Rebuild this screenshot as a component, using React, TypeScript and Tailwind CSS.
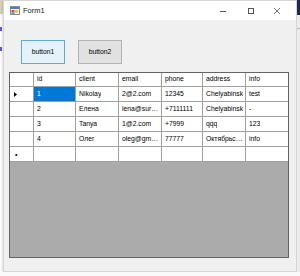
import React from "react";

type Row = {
  id: string;
  client: string;
  email: string;
  phone: string;
  address: string;
  info: string;
};

const rows: Row[] = [
  { id: "1", client: "Nikolay", email: "2@2.com", phone: "12345", address: "Chelyabinsk", info: "test" },
  { id: "2", client: "Елена", email: "lena@sureline.ru", phone: "+7111111", address: "Chelyabinsk", info: "-" },
  { id: "3", client: "Tanya", email: "1@2.com", phone: "+7999", address: "qqq", info: "123" },
  { id: "4", client: "Олег", email: "oleg@gmail.com", phone: "77777", address: "Октябрьская", info: "info" },
];

const cols: { key: keyof Row; label: string; w: string }[] = [
  { key: "id", label: "id", w: "w-[42px]" },
  { key: "client", label: "client", w: "w-[43px]" },
  { key: "email", label: "email", w: "w-[43px]" },
  { key: "phone", label: "phone", w: "w-[41px]" },
  { key: "address", label: "address", w: "w-[43px]" },
  { key: "info", label: "info", w: "w-[41px]" },
];

const FormIcon = () => (
  <svg width="10" height="9" viewBox="0 0 10 9">
    <rect x="0.5" y="0.5" width="9" height="8" fill="#f4f4f4" stroke="#8a8a8a" />
    <rect x="1" y="1" width="8" height="2" fill="#3c7fd6" />
    <rect x="1.5" y="4" width="3" height="2.5" fill="#e04a3a" />
    <rect x="5" y="4" width="3" height="2.5" fill="#f2c230" />
    <rect x="1.5" y="6.5" width="3" height="1.5" fill="#4a9be0" />
  </svg>
);

function GridRow({ row, current }: { row?: Row; current?: boolean }) {
  return (
    <div className="flex h-[15px] border-b border-[#a0a0a0] bg-white">
      <div className="flex w-[24px] items-center border-r border-[#a0a0a0] pl-[4px]">
        {current && (
          <svg width="3" height="5" viewBox="0 0 3 5">
            <path d="M0 0 L3 2.5 L0 5 Z" fill="#000" />
          </svg>
        )}
        {!row && <span className="ml-[1px] text-[7px] leading-none">•</span>}
      </div>
      {cols.map((c, i) => (
        <div
          key={c.key}
          className={`flex ${c.w} items-center overflow-hidden border-r border-[#a0a0a0] last:border-r-0 ${
            current && i === 0 ? "bg-[#0078d7] text-white" : ""
          }`}
        >
          <span className="truncate pl-[3px]">{row ? row[c.key] : ""}</span>
        </div>
      ))}
    </div>
  );
}

export default function App() {
  return (
    <div
      className="flex h-[276px] w-[300px] flex-col overflow-hidden bg-[#f7f7f7] text-black"
      style={{ fontFamily: '"Liberation Sans", Arial, sans-serif' }}
    >
      <div className="flex h-[272px]">
        {/* IDE behind, left */}
        <div className="flex w-[3px] flex-col bg-white">
          <div className="h-[14px] bg-[#d8d4b8]" />
          <div className="mt-[13px] h-[4px] w-[2px] bg-[#5a5af0]" />
          <div className="mt-[16px] h-[4px] w-[2px] bg-[#5a5af0]" />
        </div>

        {/* window */}
        <div className="flex w-[294px] flex-col border border-[#d6d6d6] bg-[#f0f0f0] shadow-[0_1px_3px_rgba(0,0,0,0.25)]">
          <div className="flex h-[19px] shrink-0 items-center bg-white">
            <div className="ml-[6px]">
              <FormIcon />
            </div>
            <span className="ml-[3px] text-[7.5px] text-[#222]">Form1</span>
            <div className="ml-auto flex items-center">
              <div className="flex w-[28px] justify-center">
                <div className="mt-[1px] h-px w-[6px] bg-[#555]" />
              </div>
              <div className="flex w-[28px] justify-center">
                <div className="h-[6px] w-[6px] border border-[#555]" />
              </div>
              <div className="mr-[7px] flex w-[24px] justify-center">
                <svg width="6" height="6" viewBox="0 0 6 6">
                  <path d="M0 0 L6 6 M6 0 L0 6" stroke="#555" strokeWidth="0.8" />
                </svg>
              </div>
            </div>
          </div>

          <div className="flex flex-col px-[5px] pt-[20px] text-[6.8px]">
            <div className="ml-[12px] flex gap-[13px]">
              <div className="flex h-[24px] w-[44px] items-center justify-center border border-[#5fa6e8] bg-[#e5f1fb]">
                button1
              </div>
              <div className="flex h-[24px] w-[44px] items-center justify-center border border-[#b4b4b4] bg-[#e1e1e1]">
                button2
              </div>
            </div>

            <div className="mt-[8px] flex h-[186px] w-[280px] flex-col border border-[#646464] bg-[#ababab]">
              <div className="flex h-[14px] border-b border-[#a0a0a0] bg-white">
                <div className="w-[24px] border-r border-[#a0a0a0]" />
                {cols.map((c) => (
                  <div
                    key={c.key}
                    className={`flex ${c.w} items-center border-r border-[#a0a0a0] last:border-r-0`}
                  >
                    <span className="pl-[3px]">{c.label}</span>
                  </div>
                ))}
              </div>
              {rows.map((r, i) => (
                <GridRow key={r.id} row={r} current={i === 0} />
              ))}
              <GridRow />
            </div>
          </div>
        </div>

        {/* IDE behind, right */}
        <div className="flex w-[3px] flex-col bg-[#ececec]">
          <div className="h-[15px] bg-[#1e2b4d]" />
          <div className="mt-[13px] h-px bg-[#b8b8b8]" />
        </div>
      </div>
      <div className="h-[4px] bg-[#fafafa]" />
    </div>
  );
}
